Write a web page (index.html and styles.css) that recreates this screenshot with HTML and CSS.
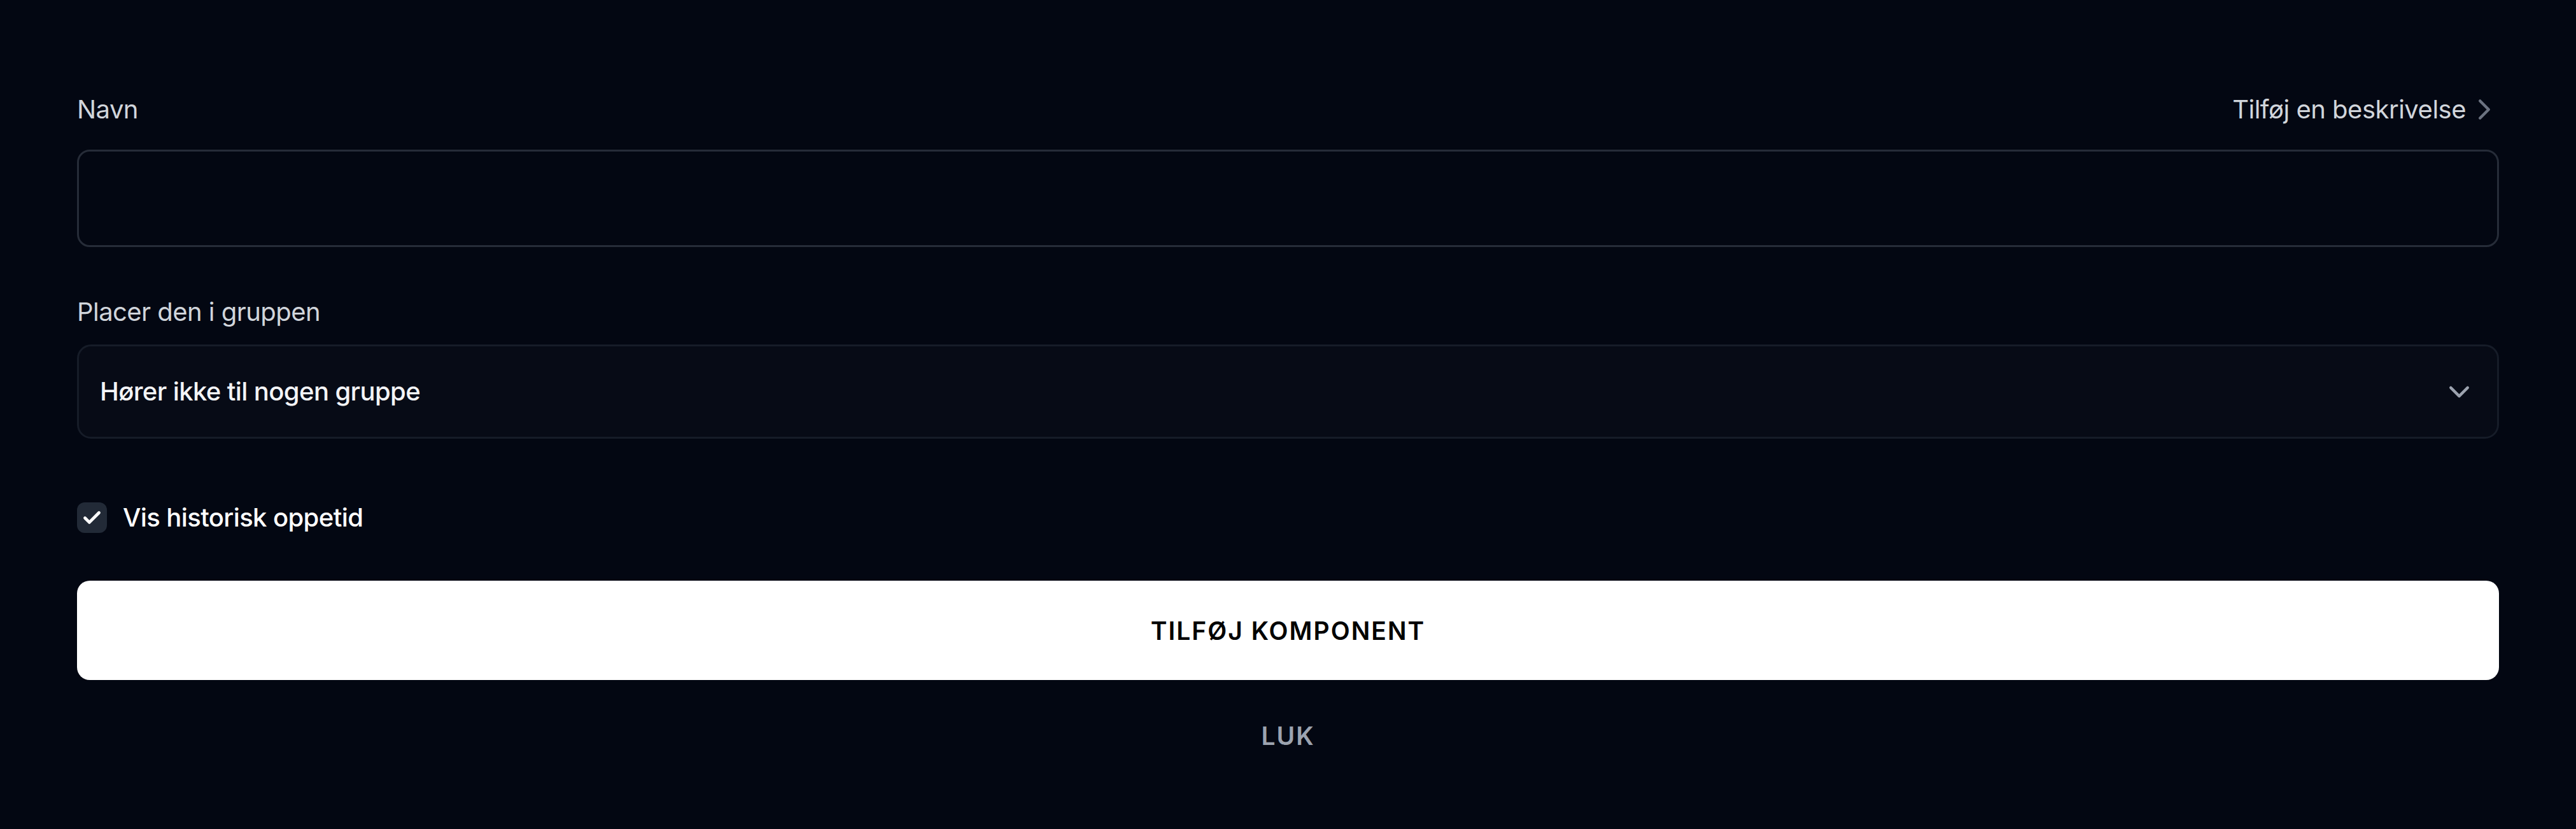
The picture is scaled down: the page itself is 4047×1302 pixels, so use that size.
FILE: index.html
```html
<!DOCTYPE html>
<html lang="da">
<head>
<meta charset="utf-8">
<title>Tilføj komponent</title>
<link rel="stylesheet" href="styles.css">
</head>
<body>
<form class="form">
  <div class="field field-name">
    <div class="label-row">
      <label class="label" for="name">Navn</label>
      <a class="desc-link" href="#">Tilføj en beskrivelse
        <svg class="icon-right" viewBox="0 0 24 24" fill="none" stroke="currentColor" stroke-width="2" stroke-linecap="round" stroke-linejoin="round"><path d="m9 18 6-6-6-6"/></svg>
      </a>
    </div>
    <input class="text-input" id="name" type="text">
  </div>

  <div class="field field-group">
    <div class="label-row">
      <span class="label">Placer den i gruppen</span>
    </div>
    <button type="button" class="select">
      <span class="select-value">Hører ikke til nogen gruppe</span>
      <svg class="icon-down" viewBox="0 0 24 24" fill="none" stroke="currentColor" stroke-width="2" stroke-linecap="round" stroke-linejoin="round"><path d="m6 9 6 6 6-6"/></svg>
    </button>
  </div>

  <label class="check-row">
    <span class="checkbox">
      <svg class="icon-check" viewBox="0 0 24 24" fill="none" stroke="currentColor" stroke-width="3.5" stroke-linecap="round" stroke-linejoin="round"><path d="M20 6 9 17l-5-5"/></svg>
    </span>
    <span class="check-label">Vis historisk oppetid</span>
  </label>

  <button type="button" class="primary-btn">Tilføj komponent</button>
  <button type="button" class="close-btn">Luk</button>
</form>
</body>
</html>
```

FILE: styles.css
```css
* {
  box-sizing: border-box;
}

html, body {
  margin: 0;
  padding: 0;
  background: #030712;
}

body {
  font-family: Inter, "Noto Sans", "Liberation Sans", sans-serif;
  color: #d1d5db;
  min-height: 1302px;
}

.form {
  display: flex;
  flex-direction: column;
  padding: 142px 121px 0;
}

.label-row {
  display: flex;
  justify-content: space-between;
  align-items: center;
  height: 60px;
}

.label {
  font-size: 40px;
  line-height: 60px;
  color: #d1d5db;
  font-weight: 400;
  letter-spacing: -0.55px;
}

.field-name .label-row {
  margin-bottom: 33px;
}

.field-group {
  margin-top: 72px;
}

.field-group .label-row {
  margin-bottom: 21px;
}

.desc-link {
  display: flex;
  align-items: center;
  gap: 2px;
  font-size: 40px;
  line-height: 60px;
  color: #d1d5db;
  text-decoration: none;
  letter-spacing: -0.5px;
}

.icon-right {
  width: 54px;
  height: 54px;
  color: #6b7280;
  margin-right: -4px;
}

.text-input {
  display: block;
  width: 100%;
  height: 153px;
  border: 3px solid #262c38;
  border-radius: 20px;
  background: #030712;
  outline: none;
  font-family: inherit;
  font-size: 40px;
  color: #fff;
  padding: 0 31px;
}

.select {
  display: flex;
  align-items: center;
  justify-content: space-between;
  width: 100%;
  height: 148px;
  border: 3px solid #161c28;
  border-radius: 22px;
  background: #070b16;
  padding: 0 33px 0 33px;
  font-family: inherit;
  cursor: pointer;
}

.select-value {
  font-size: 40px;
  line-height: 60px;
  font-weight: 500;
  color: #f3f4f6;
  letter-spacing: -0.6px;
}

.icon-down {
  width: 53px;
  height: 53px;
  color: #9ca3af;
}

.check-row {
  display: flex;
  align-items: center;
  gap: 25px;
  height: 60px;
  margin-top: 94px;
}

.checkbox {
  display: flex;
  align-items: center;
  justify-content: center;
  width: 47px;
  height: 48px;
  border-radius: 12px;
  background: #222a37;
}

.icon-check {
  width: 33px;
  height: 33px;
  color: #fff;
}

.check-label {
  font-size: 40px;
  line-height: 60px;
  font-weight: 500;
  color: #fff;
  letter-spacing: -0.6px;
}

.primary-btn {
  margin-top: 69px;
  height: 156px;
  width: 100%;
  border: none;
  border-radius: 20px;
  background: #fff;
  color: #000;
  font-family: inherit;
  font-size: 39px;
  font-weight: 600;
  letter-spacing: 2px;
  text-transform: uppercase;
  cursor: pointer;
}

.close-btn {
  align-self: center;
  margin-top: 57px;
  height: 60px;
  border: none;
  background: transparent;
  color: #9ca3af;
  font-family: inherit;
  font-size: 39px;
  font-weight: 600;
  letter-spacing: 2px;
  text-transform: uppercase;
  padding: 0 20px;
  cursor: pointer;
}
```
